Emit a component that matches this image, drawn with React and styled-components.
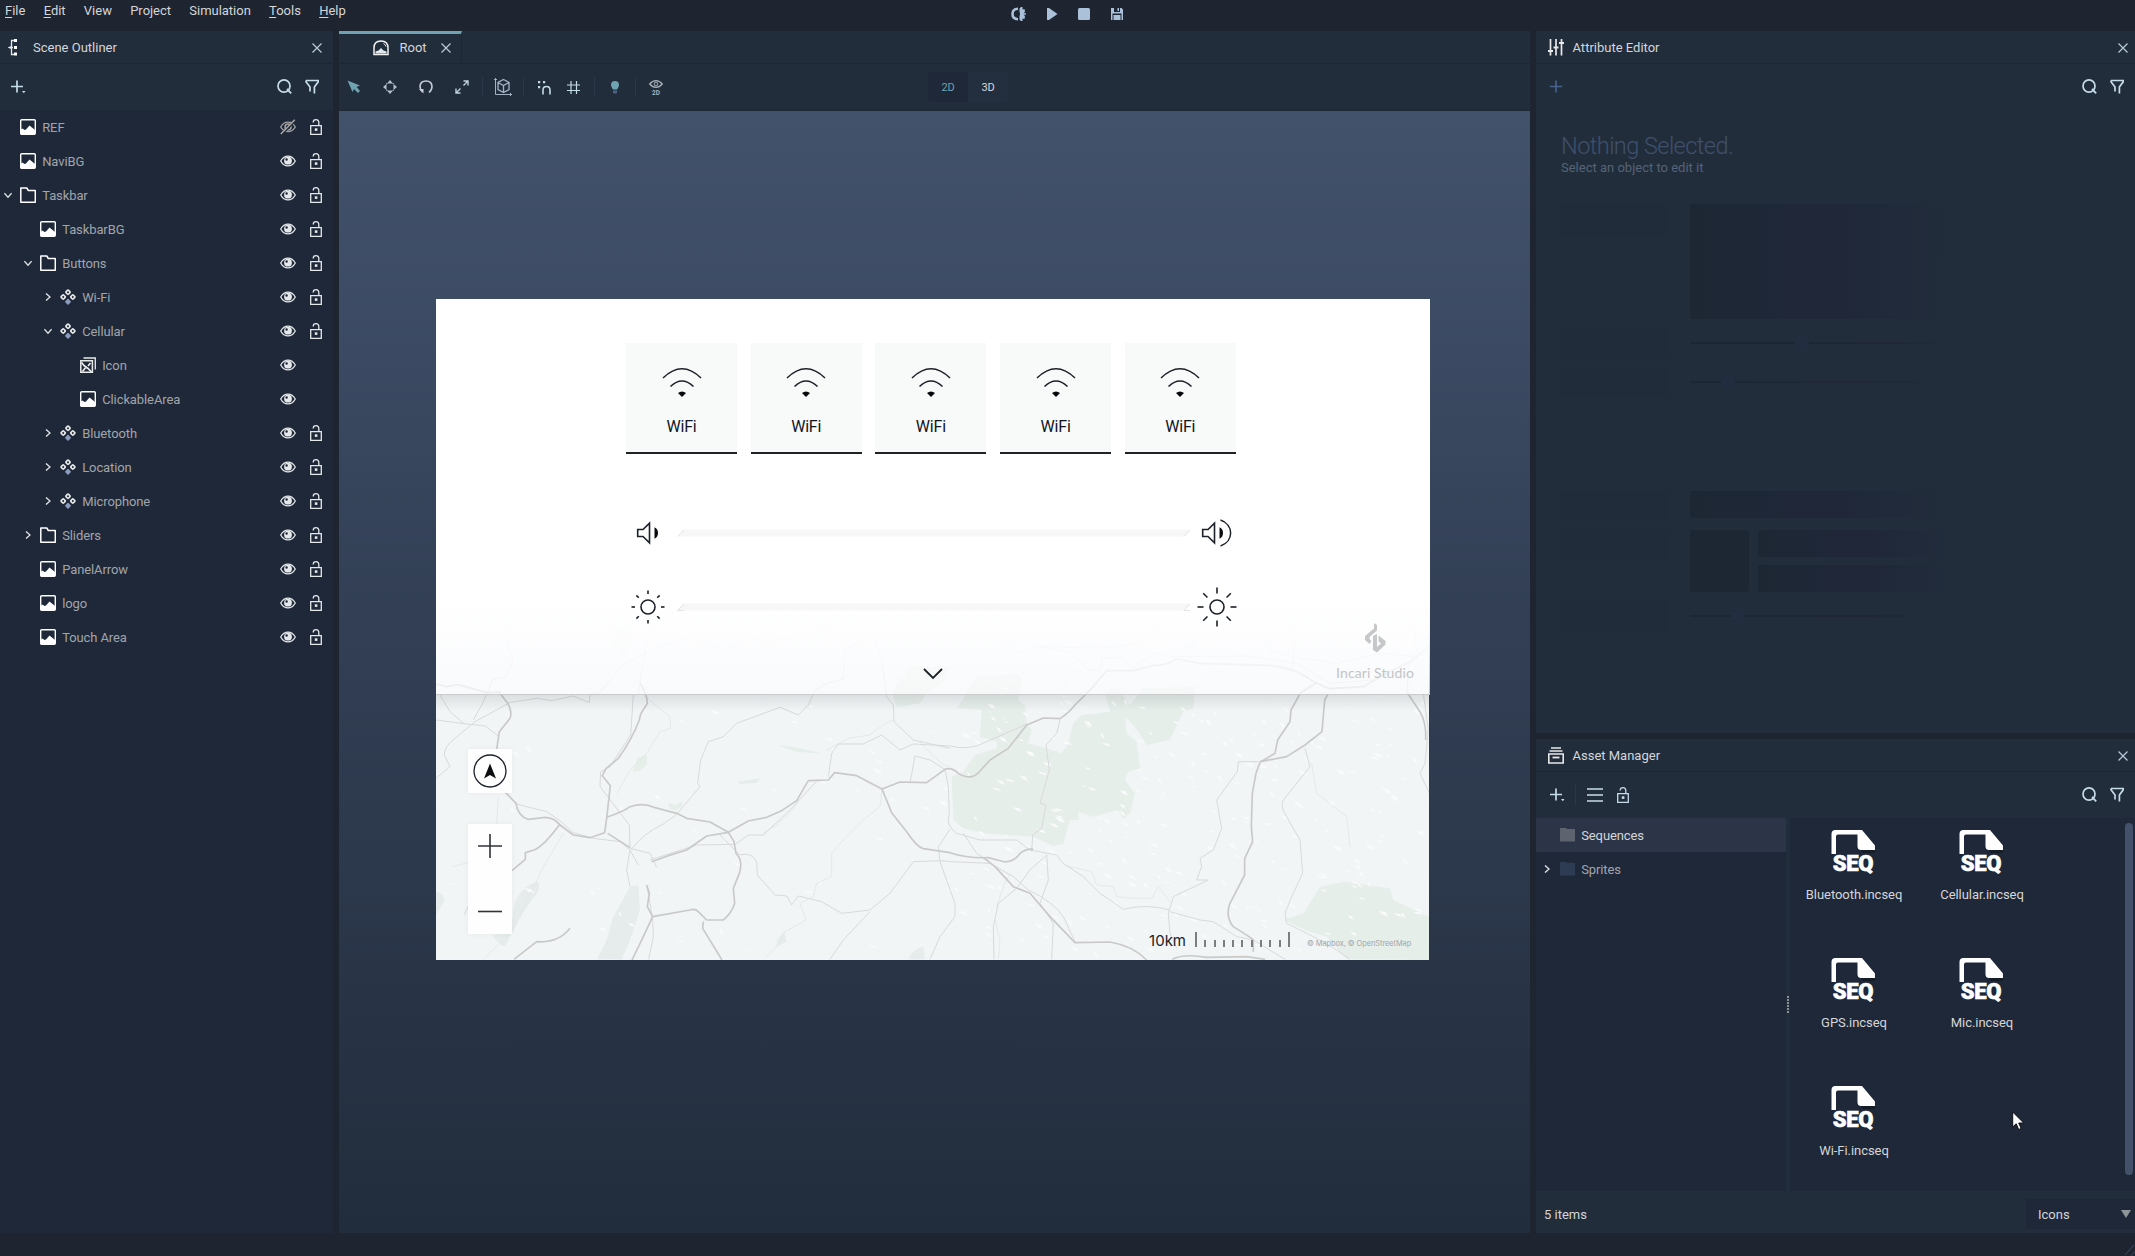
import React from "react";
import styled, { createGlobalStyle, css } from "styled-components";

const c = {
  bar: "#1e2530",
  header: "#222d3c",
  body: "#1f2838",
  line: "#1d2733",
  text: "#d4d6d9",
  dim: "#a1a5ab",
  icon: "#c6dbe8",
  pale: "#e4e8ea",
  teal: "#6fa3b1",
};

const GlobalStyle = createGlobalStyle`
  * { box-sizing: border-box; }
  html, body { margin: 0; padding: 0; background: ${c.bar}; overflow: hidden; }
  body { font-family: Roboto, "Liberation Sans", sans-serif; font-size: 13px; color: ${c.text}; }
`;

/* ---------- shell ---------- */

const Shell = styled.div`
  width: 2135px;
  height: 1256px;
  display: grid;
  grid-template-rows: 31px 1202px 23px;
  background: ${c.bar};
`;

const TopBar = styled.header`
  display: grid;
  grid-template-columns: 1011px 1fr;
  align-items: start;
`;

const Menu = styled.nav`
  display: flex;
  padding-left: 5px;
  gap: 18.300px;
  height: 22px;
  line-height: 22px;
  letter-spacing: -0.02px;
  u {
    text-underline-offset: 2px;
  }
`;

const Transport = styled.div`
  display: flex;
  gap: 19px;
  padding-top: 7px;
`;

const Workspace = styled.main`
  display: grid;
  grid-template-columns: 333px 1191px 599px;
  column-gap: 6px;
  min-height: 0;
`;

const StatusBar = styled.footer`
  display: flex;
  justify-content: flex-end;
  align-items: flex-end;
`;

const Column = styled.div`
  display: grid;
  grid-template-rows: 702px 494px;
  row-gap: 6px;
`;

const Panel = styled.section`
  display: flex;
  flex-direction: column;
  min-width: 0;
  background: ${(p) => p.$bg || c.header};
`;

const PanelHeader = styled.div`
  display: flex;
  align-items: center;
  flex: none;
  height: 33px;
  padding: 1px ${(p) => p.$right || 10}px 0 ${(p) => p.$left || 8}px;
  background: ${c.header};
  border-bottom: 1px solid ${c.line};
`;

const Title = styled.span`
  flex: 1;
  margin-left: ${(p) => p.$gap}px;
  line-height: 15px;
`;

const Toolbar = styled.div`
  display: flex;
  align-items: center;
  flex: none;
  height: 46px;
  padding: 0 ${(p) => p.$right || 10}px 1px ${(p) => p.$left || 11}px;
  background: ${c.header};
`;

const Spacer = styled.div`
  flex: 1;
`;

const Divider = styled.i`
  width: 1px;
  height: 20px;
  margin: 0 ${(p) => p.$after}px 0 ${(p) => p.$before}px;
  background: #2b384a;
`;

const Svg = styled.svg.attrs((p) => ({
  width: p.$w || 16,
  height: p.$h || p.$w || 16,
  viewBox: p.viewBox || `0 0 ${p.$w || 16} ${p.$h || p.$w || 16}`,
  fill: "none",
}))`
  display: block;
  flex: none;
  color: ${(p) => p.$color || c.pale};
  margin-left: ${(p) => p.$ml || 0}px;
`;

/* ---------- icons ---------- */

const Close = (p) => (
  <Svg $w={10} $color="#b9cad8" {...p}>
    <path d="M.5.5l9 9M9.500.5l-9 9" stroke="currentColor" strokeWidth="1.2" />
  </Svg>
);
const Search = (p) => (
  <Svg $w={15} $color={c.icon} {...p}>
    <ellipse cx="7" cy="7" rx="6" ry="6.1" stroke="currentColor" strokeWidth="1.7" />
    <path d="M10 10l4.200 4.300" stroke="currentColor" strokeWidth="1.8" />
  </Svg>
);
const Filter = (p) => (
  <Svg $w={14} $h={15} $color={c.icon} {...p}>
    <path d="M1 1.500h12.200v1.300L9.400 8v6.500M1 1.500v1.300L5 8v4.500" stroke="currentColor" strokeWidth="1.7" />
  </Svg>
);
const Plus = ({ dot, ...p }) => (
  <Svg $w={15} $h={14} $color={c.icon} {...p}>
    <path d="M0 6.500h12M6 .5v12" stroke="currentColor" strokeWidth="1.7" />
    {dot && <path d="M11 11h3.500l-1.700 2.200z" fill="currentColor" />}
  </Svg>
);
const Outliner = () => (
  <Svg $w={10} $h={17}>
    <path d="M6 1.500H3.500v6L1 8.500l2.500 1v6H6M1 8.500h4" stroke="currentColor" strokeWidth="1.3" />
    <path d="M6 0h3v3H6zM6 7h3v3H6zM6 13.500h3v3H6z" fill="#fff" />
  </Svg>
);
const Faders = () => (
  <Svg $w={16} $h={17}>
    <path d="M2.500 0v16.500M8 0v16.500M13.500 0v16.500" stroke="#e8e8e8" strokeWidth="1.7" />
    <path d="M0 12h5M5.500 8.500h5M11 4h5" stroke="#e8e8e8" strokeWidth="2" />
  </Svg>
);
const Drawer = () => (
  <Svg $w={16} $h={17}>
    <path d="M3 1h10M1.500 4h13" stroke="#e8e8e8" strokeWidth="1.6" />
    <path d="M.8 7h14.400v9H.8z" stroke="#e8e8e8" strokeWidth="1.6" />
    <path d="M4.500 10.500h7" stroke="#e8e8e8" strokeWidth="1.8" />
  </Svg>
);
const Eye = (p) => (
  <Svg $w={16} $h={12} {...p}>
    <path d="M.7 6C2.600 2.600 5 1.100 8 1.100S13.400 2.600 15.300 6C13.400 9.400 11 10.900 8 10.900S2.600 9.400.7 6z" stroke="currentColor" strokeWidth="1.3" />
    <circle cx="8" cy="5.700" r="3.900" fill="currentColor" />
    <circle cx="6.600" cy="4.500" r="1.200" fill={c.body} />
  </Svg>
);
const EyeOff = () => (
  <Svg $w={16} $h={16} $color="#a3a3a3">
    <path d="M.7 8C2.600 4.600 5 3.200 8 3.200S13.400 4.600 15.300 8C13.400 11.400 11 12.600 8 12.600S2.600 11.400.7 8z" stroke="currentColor" strokeWidth="1.300" />
    <circle cx="8" cy="8" r="3" stroke="currentColor" strokeWidth="1.5" />
    <path d="M2 15.500L15.500 2" stroke={c.body} strokeWidth="1.500" />
    <path d="M.8 15L14.800.8" stroke="currentColor" strokeWidth="1.600" />
  </Svg>
);
const Lock = (p) => (
  <Svg $w={12} $h={16} {...p}>
    <path d="M.7 6.700h10.600v8.600H.7z" stroke="currentColor" strokeWidth="1.300" />
    <path d="M8.800 6.500V3.600C8.800 1.700 7.800.7 6 .7S3.200 1.700 3.200 3.500" stroke="currentColor" strokeWidth="1.300" />
    <rect x="4.800" y="9.300" width="2.600" height="2.600" fill="currentColor" />
  </Svg>
);
const Chevron = ({ open }) => (
  <Svg $w={8}>
    <path d={open ? "M.4 2.200L4 6.200l3.600-4" : "M2 .4L6 4 2 7.600"} stroke="#dde2e5" strokeWidth="1.300" />
  </Svg>
);
const ImageIcon = () => (
  <Svg>
    <rect x=".7" y=".7" width="14.600" height="14.600" rx="1" stroke="#fff" strokeWidth="1.400" />
    <path d="M1 15V10.500l1.500-1 2 1.500 1.500-.5 3.500-4L15 11v4z" fill="#fff" />
  </Svg>
);
const FolderIcon = () => (
  <Svg>
    <path d="M.8 15.200V1h6l1.500 2.500h7v11.700z" stroke="#fff" strokeWidth="1.500" strokeLinejoin="round" />
  </Svg>
);
const PrefabIcon = () => (
  <Svg>
    <g stroke="#e8eaea" strokeWidth="1.600">
      <rect x="-1.700" y="-1.700" width="3.400" height="3.400" rx=".9" transform="translate(8 3.200) rotate(45)" />
      <rect x="-1.700" y="-1.700" width="3.400" height="3.400" rx=".9" transform="translate(3.200 8) rotate(45)" />
      <rect x="-1.700" y="-1.700" width="3.400" height="3.400" rx=".9" transform="translate(12.800 8) rotate(45)" />
    </g>
    <rect x="-2.300" y="-2.300" width="4.600" height="4.600" rx=".8" transform="translate(8 12.700) rotate(45)" fill="#8b9cc0" />
  </Svg>
);
const SpriteIcon = () => (
  <Svg>
    <path d="M3.500 1H15.300v11.500" stroke="#e8eaea" strokeWidth="1.300" />
    <path d="M.8 3.800h11.600v11.400H.8z" stroke="#e8eaea" strokeWidth="1.500" />
    <path d="M1.500 5.500l3 3.500 1.500 1-3.500 4.500M6 10l2 1.500 3.500 3.500M8 9l2.500-3" stroke="#e8eaea" strokeWidth="1.700" />
  </Svg>
);
const FolderSolid = ({ fill }) => (
  <Svg $w={15} $h={14}>
    <path d="M0 1.500V13.500h15V1H7L6 0H0z" fill={fill} />
  </Svg>
);

/* ---------- scene tree ---------- */

const Tree = styled.div`
  display: flex;
  flex-direction: column;
`;

const Row = styled.div`
  display: flex;
  align-items: center;
  height: 34px;
  padding-left: ${(p) => 3 + p.$level * 20}px;
  color: ${(p) => (p.$active ? c.text : c.dim)};
  background: ${(p) => (p.$active ? "#2c3547" : "transparent")};
`;

const Caret = styled.span`
  width: ${(p) => p.$w || 17}px;
  padding-left: ${(p) => p.$pad || 0.8}px;
`;

const Name = styled.span`
  flex: 1;
  margin-left: 6.200px;
  line-height: 16px;
  padding-top: 1px;
  letter-spacing: -0.1px;
`;

const EyeSlot = styled.span`
  width: 30px;
`;

const LockSlot = styled.span`
  width: 23px;
`;

const KIND = { image: ImageIcon, folder: FolderIcon, prefab: PrefabIcon, sprite: SpriteIcon };

const NODES = [
  ["REF", 0, "image", null, { hidden: true }],
  ["NaviBG", 0, "image"],
  ["Taskbar", 0, "folder", "open"],
  ["TaskbarBG", 1, "image"],
  ["Buttons", 1, "folder", "open"],
  ["Wi-Fi", 2, "prefab", "closed"],
  ["Cellular", 2, "prefab", "open"],
  ["Icon", 3, "sprite", null, { noLock: true }],
  ["ClickableArea", 3, "image", null, { noLock: true }],
  ["Bluetooth", 2, "prefab", "closed"],
  ["Location", 2, "prefab", "closed"],
  ["Microphone", 2, "prefab", "closed"],
  ["Sliders", 1, "folder", "closed"],
  ["PanelArrow", 1, "image"],
  ["logo", 1, "image"],
  ["Touch Area", 1, "image"],
];

function SceneOutliner() {
  return (
    <Panel $bg={c.body}>
      <PanelHeader $right={11}>
        <Outliner />
        <Title $gap={15}>Scene Outliner</Title>
        <Close />
      </PanelHeader>
      <Toolbar $right={14}>
        <Plus dot />
        <Spacer />
        <Search />
        <Filter $ml={13} />
      </Toolbar>
      <Tree>
        {NODES.map(([name, level, kind, caret, opt = {}]) => {
          const Kind = KIND[kind];
          return (
            <Row key={name} $level={level}>
              <Caret>{caret && <Chevron open={caret === "open"} />}</Caret>
              <Kind />
              <Name>{name}</Name>
              <EyeSlot>{opt.hidden ? <EyeOff /> : <Eye />}</EyeSlot>
              <LockSlot>{!opt.noLock && <Lock />}</LockSlot>
            </Row>
          );
        })}
      </Tree>
    </Panel>
  );
}

/* ---------- viewport ---------- */

const Tabs = styled.div`
  display: flex;
  flex: none;
  height: 33px;
  border-bottom: 1px solid ${c.line};
`;

const Tab = styled.div`
  display: flex;
  align-items: center;
  width: 123px;
  padding: 0 10px 2px 34px;
  border-top: 3px solid ${c.teal};
  border-right: 1px solid ${c.line};
`;

const Toggle = styled.div`
  display: flex;
  width: 80px;
  height: 30px;
  border-radius: 4px;
  overflow: hidden;
  background: #232e3f;
`;

const ToggleItem = styled.span`
  flex: 1;
  text-align: center;
  font-size: 11px;
  line-height: 32px;
  letter-spacing: -0.3px;
  color: ${(p) => (p.$on ? c.teal : "#d8dbde")};
  background: ${(p) => (p.$on ? c.body : "transparent")};
`;

const Canvas = styled.div`
  flex: 1;
  display: flex;
  align-items: flex-start;
  padding: 188px 0 0 97px;
  border-top: 1px solid ${c.line};
  background: linear-gradient(#43526b 0%, #3b4a62 22%, #323f55 45%, #2c384b 68%, #212c3c 100%);
`;

const Stage = styled.div`
  position: relative;
  width: 994px;
  height: 661px;
`;

const MapLayer = styled.svg`
  position: absolute;
  inset: 0;
  width: 993px;
  height: 661px;
`;

const Overlay = styled.div`
  position: relative;
  height: 100%;
  display: flex;
  flex-direction: column;
`;

const TaskPanel = styled.div`
  height: 396px;
  padding-top: 44px;
  display: flex;
  flex-direction: column;
  align-items: center;
  border-bottom: 1px solid #c9cbcd;
  background: linear-gradient(#fff 0 75%, rgba(254, 254, 255, 0.93) 85%, rgba(251, 252, 253, 0.7) 100%);
`;

const Cards = styled.div`
  display: flex;
  gap: 13.700px;
  width: 610px;
  margin-right: 4px;
`;

const Card = styled.div`
  width: 111px;
  height: 111px;
  display: flex;
  flex-direction: column;
  align-items: center;
  padding-top: 24px;
  background: #f8faf9;
  border-bottom: 2.500px solid #202226;
  color: #11151f;
  font-size: 16px;
  letter-spacing: -0.2px;
  line-height: 20px;
  gap: 18.500px;
`;

const SliderRow = styled.div`
  display: grid;
  grid-template-columns: 42px 521px 54px;
  align-items: center;
  width: 617px;
  height: 44px;
  margin: ${(p) => p.$top}px 0 0 4px;
  svg {
    margin: 0 auto;
  }
`;

const TrackCell = styled.div`
  padding-left: 8px;
`;

const PanelFoot = styled.div`
  display: grid;
  grid-template-columns: 1fr 20px 1fr;
  width: 100%;
  align-items: start;
`;

const ArrowCell = styled.div`
  grid-column: 2;
  padding-top: 39px;
`;

const Brand = styled.div`
  justify-self: end;
  display: flex;
  flex-direction: column;
  align-items: center;
  margin: -6px 13px 0 0;
  width: 84px;
  gap: 11px;
  color: #c3c4c7;
  font-family: Lato, sans-serif;
  font-size: 14px;
  letter-spacing: 0.1px;
  line-height: 18px;
  white-space: nowrap;
`;

const MapArea = styled.div`
  flex: 1;
  width: 993px;
  display: flex;
  justify-content: space-between;
  padding: 54px 17px 12px 32px;
  background: linear-gradient(rgba(60, 66, 72, 0.12), rgba(60, 66, 72, 0) 16px);
`;

const Controls = styled.div`
  display: flex;
  flex-direction: column;
  gap: 31px;
`;

const Tile = styled.div`
  display: flex;
  flex-direction: column;
  align-items: center;
  justify-content: space-between;
  width: 44px;
  height: ${(p) => p.$h}px;
  padding: ${(p) => p.$pad}px 0;
  background: rgba(255, 255, 255, 0.88);
  box-shadow: 0 0 5px rgba(0, 0, 0, 0.05);
`;

const Legend = styled.div`
  align-self: flex-end;
  display: flex;
  align-items: flex-end;
  margin-bottom: -2px;
  color: #1c2027;
  font: 15px/18px Inter, sans-serif;
`;

const Ticks = styled.div`
  display: flex;
  align-items: flex-end;
  justify-content: space-between;
  width: 95px;
  margin: 0 17px 3px 9px;
`;

const Tick = styled.i`
  width: 2px;
  height: ${(p) => (p.$tall ? 15 : 7)}px;
  background: #7b7d80;
`;

const Credit = styled.span`
  font-size: 7.500px;
  line-height: 12px;
  color: #a3a7aa;
  white-space: nowrap;
  width: 105px;
  letter-spacing: -0.1px;
`;

const Wifi = () => (
  <Svg $w={40} $h={31}>
    <path d="M1 11Q20-7.500 39 11" stroke="#1b2029" strokeWidth="1.600" />
    <path d="M8.500 19.500Q20 8.500 31.500 19.500" stroke="#1b2029" strokeWidth="1.600" />
    <path d="M16 26Q20 23 24 26L20 30z" fill="#05070a" />
  </Svg>
);

const Speaker = ({ loud }) => (
  <Svg $w={loud ? 31 : 24} $h={28}>
    <path d="M1.700 10.500h5.300l6.500-6.300v19.600L7 17.500H1.700z" stroke="#1b2029" strokeWidth="1.600" />
    <path d="M18.500 8.300Q22 10 22 14t-3.500 5.700z" fill="#0a0c10" />
    {loud && <path d="M19.500 1C33 5.500 33 22.500 19.500 27" stroke="#1b2029" strokeWidth="1.500" />}
  </Svg>
);

const Sun = ({ inner, outer }) => (
  <Svg $w={40}>
    <circle cx="20" cy="20" r="7" stroke="#1b2029" strokeWidth="1.600" />
    {[0, 45, 90, 135, 180, 225, 270, 315].map((a) => (
      <path key={a} d={`M20 ${20 - inner}V${20 - outer}`} transform={`rotate(${a} 20 20)`} stroke="#1b2029" strokeWidth="1.600" />
    ))}
  </Svg>
);

const Track = ({ foot }) => (
  <Svg $w={513} $h={8}>
    <path d="M7 .5H513L507 7.500H1z" fill="#f7f7f7" />
    <path d={foot ? "M7 1L.5 7.500h6M513 1l-6 6.500h6" : "M7 1L.5 7.500M513 1l-6 6.500"} stroke="#d5d9d7" strokeWidth=".7" />
  </Svg>
);

const BrandMark = () => (
  <Svg $w={22} $h={30} $color="#c6c7c9">
    <path d="M10 0l3 2v5.500L5.500 14v2l2 2-2 3-4.500-4v-4l9-7.500z" fill="currentColor" />
    <path d="M9 13l4-2v13l4-3.500-2.500-2v-6l7 5.500v3.500L13 29.500 9 27z" fill="currentColor" />
  </Svg>
);

const MAJOR = [
  "M18 192L50 200 85 194 170 218 207 216 232 248Q248 275 240 295L208 335 200 388",
  "M215 505L258 550Q265 590 295 598L345 592Q372 592 390 615L430 645 480 653 524 638 530 595 541 497 517 467 528 446 565 415Q605 360 628 300L632 282 652 250Q653 225 630 190",
  "M530 592Q580 575 600 560Q640 546 675 563L740 580 770 595 840 606 895 637 912 665 918 700Q940 720 928 760L910 805 914 850Q905 880 880 900L830 900 805 875Q795 865 780 870L668 890 640 950 606 1020",
  "M533 640L600 683",
  "M665 725L715 707 770 690 830 648 895 637 955 603 1010 592 1055 572 1100 542 1135 482 1195 480 1214 458 1280 467 1356 507 1385 578 1430 635Q1460 680 1480 686L1560 698Q1610 715 1675 713L1725 726Q1755 724 1770 700Q1790 685 1810 688",
  "M390 612Q340 680 312 690L286 698 286 718 246 752",
  "M252 1018L320 965Q385 970 420 925",
  "M668 890L652 860 658 820 650 795",
  "M820 905L818 925 876 1020",
  "M1356 507L1410 486 1490 488 1545 448Q1565 440 1585 460Q1625 485 1650 453L1680 420 1735 385 1790 315 1840 294 1890 296Q1915 280 1935 255L1985 205 2030 152 2110 152 2170 136Q2210 137 2240 117L2310 130 2520 136Q2600 145 2650 185L2700 206 2800 200 2870 160 2950 120 3000 75",
  "M2657 190L2612 218 2583 270 2580 305 2543 360 2535 400 2490 427 2478 460 2467 520 2464 620 2468 665 2444 715 2444 765 2400 850Q2385 890 2410 920L2470 958 2470 995",
  "M2695 220L2684 240 2676 335 2625 375 2570 410 2490 425",
  "M1660 713L1695 740 1750 800 1800 820 1860 890 1935 968 2040 966Q2110 978 2150 1020",
  "M2227 1018Q2260 1000 2330 1012L2450 1010 2505 1018",
  "M2933 220L2970 275Q2990 310 2987 360",
];

const MINOR = [
  "M235 248L290 240 320 235 365 242 430 228 478 248 480 222 508 220 580 132 640 105 700 75 770 55 880 88 960 50 1010 65 1165 40 1210 0",
  "M18 300L110 312 165 318 205 348",
  "M28 222L60 275 103 312",
  "M18 475L60 440 43 405Q42 380 75 355L135 305 232 252",
  "M130 300L158 250 172 218 188 178 225 172 250 120 235 80 250 0",
  "M260 552L310 565 350 575 390 602 430 638 490 655 570 665 600 690 625 735",
  "M103 885L125 835 245 752",
  "M610 225L602 345 540 440 512 455 510 500 545 545 598 615 600 685 660 700 680 742",
  "M625 225L635 150 655 50 665 0",
  "M600 690L590 750 600 800M650 795L660 850 668 900 670 950 656 1018",
  "M604 688Q640 640 700 612L738 585 810 500 803 490 812 420 835 365 880 350 920 310 1050 262 1105 285 1135 255 1155 210 1195 188 1240 178 1245 90 1330 42 1320 0",
  "M660 720L800 675 915 673 955 645 1000 645 1080 570 1165 478",
  "M870 645L930 705Q965 695 980 725L982 765 1035 825 1070 828 1085 855 1105 828 1175 845 1235 880 1320 870 1380 820 1450 725 1535 722 1560 725 1680 730 1750 770 1795 810Q1870 845 1900 890L1935 965",
  "M1195 470L1205 400 1225 372 1300 372 1355 345 1410 390 1450 372 1560 378Q1600 388 1640 378L1700 352 1790 312",
  "M1330 40L1355 120 1370 230 1390 255 1392 305 1450 360 1560 385",
  "M1440 490L1455 408 1500 420 1545 448 1555 500 1558 580Q1545 615 1580 640L1650 660 1760 660 1800 690 1880 705 1900 730 1960 770 2010 820 2080 868Q2150 850 2220 870",
  "M1560 628L1525 680 1530 725 1575 850 1575 890 1530 950 1500 1018",
  "M1200 1018L1240 960 1320 875",
  "M1600 640L1640 700 1680 725",
  "M1890 300L1880 340 1848 375 1858 450 1830 550 1848 555 1835 625 1808 645 1805 695",
  "M1850 705L1855 780 1830 850 1870 910 1865 1018M1850 705L1800 750 1760 805 1705 850 1690 920 1692 1018",
  "M2625 385L2640 440 2560 540Q2550 560 2570 590L2610 660 2618 760 2585 830 2565 880 2570 910 2650 950 2720 990 2760 1018",
  "M2485 425L2425 425 2422 455 2360 540 2375 625 2350 690 2310 715 2315 740 2300 780 2335 780 2230 830 2215 880 2220 940 2240 985M2220 875L2310 900 2350 905 2420 950 2470 960 2565 1018",
  "M2980 220L2995 330 2985 430 2970 460 2998 520",
  "M1720 30L1735 80 1770 98 1820 78 1920 95 1975 150 2010 150 2015 115 2080 112 2110 148M1820 78L2000 85 2120 72 2170 40 2200 0M2110 140L2180 98 2230 110 2450 108 2600 130 2700 190 2830 180 2880 150",
  "M2480 30L2520 90 2590 110 2720 130 2850 100 2960 110M2585 0L2595 60 2587 150M2950 0L2960 90 2935 140 2932 220",
];

const WHISPER = [
  "M640 225L720 290 722 325 690 335 650 400 600 450 560 520",
  "M1560 440Q1535 440 1470 365M1390 300Q1360 310 1320 345L1255 355 1190 390",
  "M1356 510L1350 560 1300 600 1240 660 1205 700 1205 770 1160 790 1150 830 1110 850 1128 900 1065 935 1045 975 1005 1015",
  "M1105 545Q1070 600 1000 640",
  "M70 740L140 720 200 610 205 530",
  "M160 1018L250 930 340 740 400 640",
  "M1900 735L1985 755 2000 795 2050 800 2060 830 2110 835 2165 835 2185 800 2220 845",
  "M2645 430L2660 520 2750 590 2760 680",
  "M1695 900L1710 960 1705 1018M1740 760L1720 800 1700 860",
];

const GREEN = [
  "M1580 265L1610 220 1640 170 1780 160 1765 240 1785 255 1790 310 1805 330 1795 370 1850 385 1895 400 1915 370 1930 310 1955 285 2040 275 2025 220 2060 200 2100 255 2140 205 2295 200 2290 265 2260 275 2220 360 2150 375 2115 320 2085 290 2090 340 2120 365 2130 445 2095 455 2085 480 2115 520 2100 580 2080 598 2065 570 1990 590 1945 575 1945 600 1920 600 1900 672 1870 678 1810 650 1660 640 1600 625 1570 600 1565 470 1600 455 1635 405 1700 385 1700 365 1650 350 1655 270z",
  "M2560 900L2620 880 2670 800 2740 785 2880 805 2890 840 2997 890 3000 1020 2750 1018 2690 950 2640 935z",
  "M1395 200Q1440 120 1480 140L1560 140 1540 185 1490 220 1470 250 1400 262 1390 230z",
  "M608 455L622 415 650 405 652 430 635 450z",
  "M715 548L735 555 758 545 755 560 735 572 718 565z",
  "M1040 375L1090 380 1185 402 1100 395z",
];

const LAKES = [
  "M502 1018L530 960 550 890 600 800 625 795 630 870 600 960 575 1018z",
  "M255 845Q285 790 325 785 335 810 305 840L265 900 225 980Q205 975 188 945L240 940z",
  "M18 815Q45 820 42 845L18 885z",
  "M1435 1018Q1450 985 1480 980L1485 1018z",
  "M925 485L990 475 980 488 930 493z",
  "M1040 960L1062 935 1070 965 1040 980z",
  "M540 30L600 20 610 70 575 115 550 75z",
  "M2260 90L2285 50 2310 100z",
];

/* Small light clearings scattered over the terrain, seeded so they stay put. */
const clearings = (() => {
  let s = 11;
  const r = () => {
    s = (s * 16807) % 2147483647;
    return s / 2147483647;
  };
  const out = [];
  for (let i = 0; i < 380; i++) {
    const left = i < 60;
    const x = left ? 30 + r() * 1520 : 1570 + r() * 1400;
    const y = 20 + r() * 980;
    const w = 10 + r() * 22;
    const h = 4 + r() * 11;
    out.push(`M${x.toFixed(0)} ${y.toFixed(0)}l${(w * 0.7).toFixed(0)} ${(h * 0.3).toFixed(0)} ${(w * 0.3).toFixed(0)} ${h.toFixed(0)} ${(-w * 0.6).toFixed(0)} ${(-h * 0.4).toFixed(0)}z`);
  }
  return out.join("");
})();

const MapDrawing = () => (
  <MapLayer viewBox="0 0 993 661" fill="none">
    <rect width="993" height="661" fill="#f1f5f6" />
    <g transform="translate(-6 321) scale(.33333)" strokeLinejoin="round">
      {GREEN.map((d) => <path key={d} d={d} fill="#e6eeea" />)}
      {LAKES.map((d) => <path key={d} d={d} fill="#e6eceb" />)}
      <path d={clearings} fill="#f9fbfb" />
      {WHISPER.map((d) => <path key={d} d={d} stroke="#e3e6e7" strokeWidth="2.500" />)}
      {MINOR.map((d) => <path key={d} d={d} stroke="#d8d9da" strokeWidth="3" />)}
      {MAJOR.map((d) => <path key={d} d={d} stroke="#c9c9ca" strokeWidth="5" />)}
    </g>
  </MapLayer>
);

const ViewportToolbar = styled(Toolbar)`
  padding: 0 522px 0 8px;
`;

function Viewport() {
  return (
    <Panel>
      <Tabs>
        <Tab>
          <Svg $w={16} $h={16}>
            <path d="M1 14.500V8Q1 1 8 1t7 7v6.500z" stroke="#f1f1f1" strokeWidth="1.500" />
            <path d="M2.500 13.500v-2l3-1L8 8l2.500 2.500 3 1v2z" fill="#dfe8ee" />
            <path d="M10.500 3.500q2 1 2.500 3" stroke="#dfe8ee" />
          </Svg>
          <Title $gap={10.5}>Root</Title>
          <Close />
        </Tab>
      </Tabs>
      <ViewportToolbar>
        <Svg $w={14} $color={c.teal}>
          <path d="M.5.5l12.500 5-3.500 1.500 3.500 4-2 2-4-4L5.500 12z" fill="currentColor" />
        </Svg>
        <Svg $w={14} $ml={22} $color="#b4c0d0">
          <path d="M7 0l3 3.500H4zM7 14l3-3.500H4zM0 7l3.500-3v6zM14 7l-3.500-3v6z" fill="currentColor" />
          <path d="M3.400 4.200l.8-.8M9.800 3.400l.8.8M3.400 9.800l.8.8M9.800 10.600l.8-.8" stroke="currentColor" strokeWidth="1.200" />
        </Svg>
        <Svg $w={14} $ml={22} $color="#c3cbd6">
          <path d="M3.500 12Q1 9.500 1 6.500 1.200 1 7 1t6 5.500Q13 10 10 12.500" stroke="currentColor" strokeWidth="1.600" />
          <path d="M0 9h4.500v4.500z" fill="currentColor" />
        </Svg>
        <Svg $w={14} $ml={22} $color="#bcd0dc">
          <path d="M8.500 1H13v4.500M13 1L8.500 5.500M1 8.500V13h4.500M1 13l4.500-4.500" stroke="currentColor" strokeWidth="1.400" />
        </Svg>
        <Divider $before={12.5} $after={11.5} />
        <Svg $w={18} $h={18} $color="#a4b3c2">
          <path d="M1.500 0v16.500H18M0 2l1.500-1.500L3 2M16 15l1.500 1.500L16 18" stroke="currentColor" />
          <path d="M9.500 1.500l5.500 3v7l-5.500 3-5.500-3v-7zM4 4.500l5.500 3 5.500-3M9.500 7.500v7" stroke="currentColor" strokeWidth="1.300" />
        </Svg>
        <Divider $before={10.5} $after={14.5} />
        <Svg $w={13} $h={15} $color="#c3dbe6">
          <path d="M0 1h2.200v2.200H0zM5 1h2.200v2.200H5zM0 6h2.200v2.200H0z" fill="currentColor" />
          <path d="M5 14.500V10q0-3.500 3.500-3.500T12 10v4.500" stroke="currentColor" strokeWidth="1.600" />
        </Svg>
        <Svg $w={13} $ml={16} $color="#c3dbe6">
          <path d="M4 0v13M9.500 0v13M0 4h13M0 9.500h13" stroke="currentColor" strokeWidth="1.200" />
        </Svg>
        <Divider $before={14} $after={16} />
        <Svg $w={8} $h={13} $color={c.teal}>
          <path d="M4 0q4 .2 4 4 0 2-2 4.500H2Q0 6 0 4 0 .2 4 0z" fill="currentColor" />
          <path d="M2 9.500h4v2l-1 1H3l-1-1z" fill="#4d6488" />
        </Svg>
        <Divider $before={16} $after={13} />
        <Svg $w={14} $h={15} $color="#a8b2bc">
          <path d="M.7 4Q3.500.7 7 .7T13.300 4Q10.500 7.300 7 7.300T.7 4z" stroke="currentColor" strokeWidth="1.200" />
          <circle cx="7" cy="4" r="1.800" stroke="currentColor" />
          <text x="7" y="14.500" textAnchor="middle" fontSize="6.500" fontWeight="700" fill="currentColor">2D</text>
        </Svg>
        <Spacer />
        <Toggle>
          <ToggleItem $on>2D</ToggleItem>
          <ToggleItem>3D</ToggleItem>
        </Toggle>
      </ViewportToolbar>
      <Canvas>
        <Stage>
          <MapDrawing />
          <Overlay>
            <TaskPanel>
              <Cards>
                {[0, 1, 2, 3, 4].map((i) => (
                  <Card key={i}>
                    <Wifi />
                    WiFi
                  </Card>
                ))}
              </Cards>
              <SliderRow $top={57}>
                <Speaker />
                <TrackCell><Track /></TrackCell>
                <Speaker loud />
              </SliderRow>
              <SliderRow $top={29.5}>
                <Sun inner={13} outer={16.5} />
                <TrackCell><Track foot /></TrackCell>
                <Sun inner={13.5} outer={19.5} />
              </SliderRow>
              <PanelFoot>
                <ArrowCell>
                  <Svg $w={20} $h={12}>
                    <path d="M1 1l9 9 9-9" stroke="#1b2029" strokeWidth="1.800" />
                  </Svg>
                </ArrowCell>
                <Brand>
                  <BrandMark />
                  Incari Studio
                </Brand>
              </PanelFoot>
            </TaskPanel>
            <MapArea>
              <Controls>
                <Tile $h={44} $pad={5}>
                  <Svg $w={34}>
                    <circle cx="17" cy="17" r="16" stroke="#1b2029" strokeWidth="1.300" />
                    <path d="M17 9.500l6 15-6-3.500-6 3.500z" fill="#0c0e12" />
                  </Svg>
                </Tile>
                <Tile $h={110} $pad={10}>
                  <Svg $w={24}>
                    <path d="M0 12h24M12 0v24" stroke="#2f3439" strokeWidth="1.600" />
                  </Svg>
                  <Svg $w={24}>
                    <path d="M0 11.500h24" stroke="#2f3439" strokeWidth="1.600" />
                  </Svg>
                </Tile>
              </Controls>
              <Legend>
                10km
                <Ticks>
                  {Array.from({ length: 11 }, (_, i) => <Tick key={i} $tall={i % 10 === 0} />)}
                </Ticks>
                <Credit>© Mapbox, © OpenStreetMap</Credit>
              </Legend>
            </MapArea>
          </Overlay>
        </Stage>
      </Canvas>
    </Panel>
  );
}

/* ---------- attribute editor ---------- */

const EmptyState = styled.div`
  padding: 22px 0 0 25px;
`;

const EmptyTitle = styled.h2`
  margin: 0;
  font-size: 23.500px;
  font-weight: 300;
  line-height: 28px;
  letter-spacing: -0.55px;
  color: #3f506b;
`;

const EmptyHint = styled.p`
  margin: 0;
  line-height: 16px;
  color: #566376;
`;

const Ghosts = styled.div`
  display: grid;
  grid-template-columns: 109px 275px;
  column-gap: 21px;
  row-gap: 8px;
  margin: ${(p) => p.$top}px 0 0 24px;
`;

const GhostLabel = styled.div`
  height: 31px;
  background: #212c3b;
`;

const fade = css`
  background: linear-gradient(90deg, #1d2734, #1f2738 35%, #1f2738 55%, rgba(31, 40, 56, 0) 95%);
`;

const GhostBar = styled.div`
  height: ${(p) => (p.$h ? `${p.$h}px` : "auto")};
  border-radius: 2px;
  ${fade}
`;

const GhostPair = styled.div`
  display: grid;
  grid-template-columns: 59px 1fr;
  gap: 8px 9px;
  > :first-child {
    grid-row: span 2;
    background: #1d2734;
  }
`;

const GhostSlider = styled.div`
  display: flex;
  align-items: center;
  height: 31px;
`;

const GhostLine = styled.i`
  height: 2px;
  ${fade}
  ${(p) => (p.$w ? `width: ${p.$w}px; background: #1d2734;` : "flex: 1;")}
`;

const GhostKnob = styled.i`
  width: 14px;
  height: 14px;
  border-radius: 50%;
  background: #232d40;
`;

const Slider = ({ at }) => (
  <GhostSlider>
    <GhostLine $w={at} />
    <GhostKnob />
    <GhostLine />
  </GhostSlider>
);

function AttributeEditor() {
  return (
    <Panel>
      <PanelHeader $left={12} $right={7.5}>
        <Faders />
        <Title $gap={8.5}>Attribute Editor</Title>
        <Close />
      </PanelHeader>
      <Toolbar $left={14} $right={11}>
        <Plus $color="#46618a" />
        <Spacer />
        <Search />
        <Filter $ml={13} />
      </Toolbar>
      <EmptyState>
        <EmptyTitle>Nothing Selected.</EmptyTitle>
        <EmptyHint>Select an object to edit it</EmptyHint>
      </EmptyState>
      <Ghosts $top={28}>
        <GhostLabel />
        <GhostBar $h={115} />
        <GhostLabel />
        <Slider at={105} />
        <GhostLabel />
        <Slider at={31} />
      </Ghosts>
      <Ghosts $top={94}>
        <GhostLabel />
        <GhostBar $h={27} />
        <GhostLabel />
        <GhostPair>
          <GhostBar />
          <GhostBar $h={27} />
          <GhostBar $h={27} />
        </GhostPair>
        <GhostLabel />
        <Slider at={41} />
      </Ghosts>
    </Panel>
  );
}

/* ---------- asset manager ---------- */

const AssetBody = styled.div`
  display: grid;
  grid-template-columns: 250px 4px 345px;
  grid-template-rows: 373px;
  height: 373px;
`;

const AssetTree = styled.div`
  background: ${c.body};
`;

const Splitter = styled.div`
  display: flex;
  flex-direction: column;
  align-items: center;
  justify-content: center;
  gap: 1px;
  i {
    width: 2px;
    height: 2px;
    background: #8b9098;
  }
`;

const AssetGrid = styled.div`
  position: relative;
  display: grid;
  grid-template-columns: 128px 128px 1fr;
  grid-auto-rows: 128px;
  align-content: start;
  min-height: 0;
  overflow: hidden;
  background: ${c.body};
`;

const AssetItem = styled.div`
  grid-column: ${(p) => p.$col};
  display: flex;
  flex-direction: column;
  align-items: center;
  padding: 12px 1px 0 0;
`;

const Thumb = styled.div`
  width: 44px;
  height: 44px;
  margin-right: 1px;
  color: #fff;
`;

const ThumbText = styled.div`
  font-size: 22px;
  font-weight: 900;
  line-height: 20px;
  margin-top: 0;
  letter-spacing: -0.2px;
  text-align: center;
  -webkit-text-stroke: 0.6px #fff;
`;

const AssetName = styled.div`
  margin-top: 13px;
  line-height: 16px;
  padding-left: 1px;
  letter-spacing: -0.05px;
  white-space: nowrap;
`;

const ScrollThumb = styled.div`
  position: absolute;
  top: 5px;
  right: 2px;
  width: 8px;
  height: 352px;
  border-radius: 4px;
  background: #43526a;
`;

const Pointer = styled.div`
  position: absolute;
  left: 222px;
  top: 293px;
`;

const AssetFooter = styled.div`
  display: flex;
  align-items: center;
  justify-content: space-between;
  height: 42px;
  padding: 4px 0 0 8px;
`;

const Select = styled.div`
  display: flex;
  align-items: center;
  justify-content: space-between;
  width: 109px;
  height: 30px;
  padding: 0 4px 0 12px;
  border-radius: 3px 0 0 3px;
  background: ${c.body};
`;

const ASSETS = ["Bluetooth.incseq", "Cellular.incseq", "GPS.incseq", "Mic.incseq", "Wi-Fi.incseq"];

function AssetManager() {
  return (
    <Panel>
      <PanelHeader $left={12} $right={7.5}>
        <Drawer />
        <Title $gap={8.5}>Asset Manager</Title>
        <Close />
      </PanelHeader>
      <Toolbar $left={14} $right={11}>
        <Plus dot />
        <Divider $before={10} $after={11} />
        <Svg $w={16} $h={14} $color={c.icon}>
          <path d="M0 1h16M0 7h16M0 13h16" stroke="currentColor" strokeWidth="1.500" />
        </Svg>
        <Lock $ml={14} $color={c.icon} />
        <Spacer />
        <Search />
        <Filter $ml={13} />
      </Toolbar>
      <AssetBody>
        <AssetTree>
          <Row $level={0} $active>
            <Caret $w={21} />
            <FolderSolid fill="#5d6470" />
            <Name>Sequences</Name>
          </Row>
          <Row $level={0}>
            <Caret $w={21} $pad={4}><Chevron /></Caret>
            <FolderSolid fill="#2e3c53" />
            <Name>Sprites</Name>
          </Row>
        </AssetTree>
        <Splitter><i /><i /><i /><i /><i /><i /></Splitter>
        <AssetGrid>
          {ASSETS.map((name, i) => (
            <AssetItem key={name} $col={(i % 2) + 1}>
              <Thumb>
                <Svg $w={44} $h={24}>
                  <path d="M27 17l5 6h12v-3z" fill="#161d27" />
                  <path d="M.5 24V4Q.5 0 4.500 0H31L44 15.500V20H30Q26.500 20 26.500 16V4.500H7Q5 4.500 5 6.500V24z" fill="#fff" />
                </Svg>
                <ThumbText>SEQ</ThumbText>
              </Thumb>
              <AssetName>{name}</AssetName>
            </AssetItem>
          ))}
          <ScrollThumb />
          <Pointer>
            <Svg $w={13} $h={20}>
              <path d="M.7 1v15l3.500-3.200 2.500 5.700 2.500-1-2.500-5.500h5z" fill="#fff" stroke="#0c0f14" />
            </Svg>
          </Pointer>
        </AssetGrid>
      </AssetBody>
      <AssetFooter>
        <span>5 items</span>
        <Select>
          Icons
          <Svg $w={10} $h={8} $color="#8e9499">
            <path d="M0 0h10L5 8z" fill="currentColor" />
          </Svg>
        </Select>
      </AssetFooter>
    </Panel>
  );
}

/* ---------- app ---------- */

export default function App() {
  return (
    <>
      <GlobalStyle />
      <Shell>
        <TopBar>
          <Menu>
            <span><u>F</u>ile</span>
            <span><u>E</u>dit</span>
            <span>View</span>
            <span>Project</span>
            <span>Simulation</span>
            <span><u>T</u>ools</span>
            <span><u>H</u>elp</span>
          </Menu>
          <Transport>
            <Svg $w={15} $h={14} $color="#abc0d9">
              <path d="M7 1.800Q1.500 2 1.500 7T7 12.200" stroke="currentColor" strokeWidth="2.600" />
              <path d="M8.500 1.500L10 0h1.500v2.500L13.500 2l.5 3-1.500 1.200H15v1.600h-2.500L14 9l-.5 3-2-.5V14H10l-1.500-1.500V9.200Q9.700 7 8.500 4.800z" fill="currentColor" />
            </Svg>
            <Svg $w={14} $ml={2} $color="#abc0d9">
              <path d="M0 1h2l8.500 6L2 13H0z" fill="currentColor" />
            </Svg>
            <Svg $w={12} $h={14} $ml={-2} $color="#abc0d9">
              <rect y="1" width="12" height="12" rx="1.500" fill="currentColor" />
            </Svg>
            <Svg $w={12} $h={14} $ml={2} $color="#abc0d9">
              <path d="M0 1h3v4h6V1h1.500L12 2.500V13h-1.500V6.500h-9V13H0zM6.500 1H8v3H6.500z" fill="currentColor" />
              <path d="M2.500 8h7v5h-7z" fill="currentColor" />
            </Svg>
          </Transport>
        </TopBar>
        <Workspace>
          <SceneOutliner />
          <Viewport />
          <Column>
            <AttributeEditor />
            <AssetManager />
          </Column>
        </Workspace>
        <StatusBar>
          <Svg $w={10} $h={12} $color="#3d4d66">
            <path d="M0 11L9 1M6 12l4-4.500" stroke="currentColor" />
          </Svg>
        </StatusBar>
      </Shell>
    </>
  );
}
